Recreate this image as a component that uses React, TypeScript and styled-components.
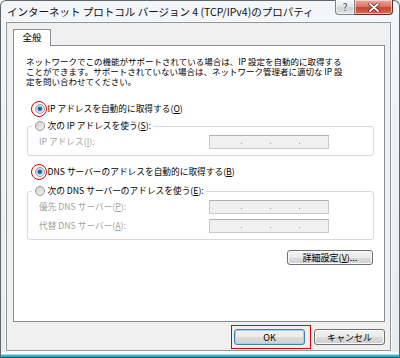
import React from "react";
import styled, { createGlobalStyle } from "styled-components";

const FONT = `"Noto Sans CJK JP", "Noto Sans", sans-serif`;

const Global = createGlobalStyle`
  html, body { margin: 0; padding: 0; background: #ffffff; }
  body { font-family: ${FONT}; -webkit-font-smoothing: antialiased; }
  #root { width: 400px; height: 358px; }
`;

const Window = styled.div`
  box-sizing: border-box;
  width: 400px;
  height: 358px;
  display: flex;
  flex-direction: column;
  padding: 0 8px 7px 5px;
  border: 1px solid #60666b;
  border-bottom: none;
  border-radius: 6px 6px 0 0;
  background:
    linear-gradient(to top, #36464c 0 1px, #2eaed3 1px 3px, #a5e2f1 3px 4px, #fbfcfd 4px 6px, transparent 6px),
    linear-gradient(to bottom, #f4f6f8 0%, #e8ecef 100%);
  font-family: ${FONT};
  color: #000;
`;

const TitleBar = styled.div`
  height: 21px;
  display: flex;
  justify-content: space-between;
  align-items: flex-start;
`;

const Title = styled.div`
  padding-left: 1px;
  font-size: 10.5px;
  line-height: 21px;
  white-space: nowrap;
  color: #111;
`;

const CaptionButtons = styled.div`
  display: flex;
  margin-top: -1px;
  margin-right: -2px;
`;

const CaptionButton = styled.div<{ $kind: "help" | "close" }>`
  box-sizing: border-box;
  height: 15px;
  width: ${(p) => (p.$kind === "close" ? 38 : 20)}px;
  display: flex;
  align-items: center;
  justify-content: center;
  border: 1px solid ${(p) => (p.$kind === "close" ? "#6b2a22" : "#7c8287")};
  border-top: none;
  border-radius: ${(p) => (p.$kind === "close" ? "0 0 4px 0" : "0 0 0 4px")};
  border-left: ${(p) => (p.$kind === "close" ? "none" : "")};
  background: ${(p) =>
    p.$kind === "close"
      ? "linear-gradient(to bottom, #e7a99c 0%, #d8776a 45%, #c9452f 55%, #d5694f 100%)"
      : "linear-gradient(to bottom, #f6f7f8 0%, #e4e8eb 45%, #ccd2d7 55%, #dfe4e8 100%)"};
  box-shadow: inset 0 0 0 1px rgba(255, 255, 255, 0.55);
  font-size: 10px;
  line-height: 1;
  color: #3a3f44;
  text-shadow: 0 0 2px #fff, 0 0 2px #fff;
`;

const Client = styled.div`
  flex: 1;
  box-sizing: border-box;
  display: flex;
  flex-direction: column;
  padding: 6px 3px 5px 6px;
  border: 1px solid #92979c;
  background: #f0f0f0;
  box-shadow: 0 0 0 1px rgba(255, 255, 255, 0.85);
`;

const TabStrip = styled.div`
  display: flex;
  height: 16px;
`;

const Tab = styled.div`
  box-sizing: border-box;
  width: 38px;
  height: 17px;
  position: relative;
  z-index: 1;
  border: 1px solid #898c95;
  border-bottom: none;
  background: #ffffff;
  font-size: 9.5px;
  line-height: 15px;
  text-align: center;
`;

const Panel = styled.div`
  box-sizing: border-box;
  width: 372px;
  height: 277px;
  border: 1px solid #898c95;
  background: #ffffff;
  padding: 10px 11px 0 12px;
  display: flex;
  flex-direction: column;
  font-size: 8.7px;
`;

const Description = styled.div`
  font-size: 8.5px;
  line-height: 10px;
  white-space: nowrap;
`;

const RadioRow = styled.div<{ $indent?: number; $top?: number }>`
  display: flex;
  align-items: center;
  height: 12px;
  margin-left: ${(p) => p.$indent ?? 0}px;
  margin-top: ${(p) => p.$top ?? 0}px;
  white-space: nowrap;
  line-height: 12px;
`;

const RadioMark = styled.span`
  position: relative;
  width: 10px;
  height: 10px;
  flex: 0 0 10px;
  margin-right: 2.5px;
  display: inline-flex;
`;

const Ring = styled.span`
  position: absolute;
  left: -4px;
  top: -3px;
  width: 14px;
  height: 14px;
  border: 1.4px solid #e40000;
  border-radius: 50%;
`;

const Group = styled.fieldset<{ $top: number }>`
  box-sizing: border-box;
  width: 347px;
  margin: ${(p) => p.$top}px 0 0 1px;
  padding: 0 0 6px 0;
  border: 1px solid #d5dadd;
  border-radius: 3px;
  min-inline-size: 0;
`;

const GroupLegend = styled.legend`
  margin-left: 4px;
  padding: 0 2px 0 3px;
  font-size: 8.7px;
`;

const FieldRow = styled.div<{ $top: number }>`
  display: flex;
  align-items: center;
  height: 14px;
  padding-left: 11px;
  margin-top: ${(p) => p.$top}px;
`;

const FieldLabel = styled.span`
  flex: 0 0 170px;
  color: #a2a2a2;
  white-space: nowrap;
  line-height: 14px;
`;

const IpField = styled.div`
  box-sizing: border-box;
  width: 120px;
  height: 14px;
  border: 1px solid #c6c9cc;
  border-top-color: #aeb2b6;
  background: #f0f0f0;
  display: flex;
  justify-content: space-between;
  align-items: flex-end;
  padding: 0 28px 4px 31px;
`;

const Dot = styled.span`
  width: 1px;
  height: 1px;
  background: #9a9a9a;
`;

const Key = styled.span`
  text-decoration: underline;
  text-underline-offset: 1px;
  text-decoration-thickness: 1px;
`;

const AdvancedRow = styled.div`
  display: flex;
  justify-content: flex-end;
  margin-top: 10px;
`;

const PushButton = styled.button<{ $w: number; $h: number; $default?: boolean }>`
  box-sizing: border-box;
  width: ${(p) => p.$w}px;
  height: ${(p) => p.$h}px;
  padding: 0;
  margin: 0;
  border: 1px solid ${(p) => (p.$default ? "#3c7fb1" : "#707070")};
  border-radius: 3px;
  background: linear-gradient(to bottom, #f2f2f2 0%, #ebebeb 50%, #dddddd 50%, #cfcfcf 100%);
  box-shadow: inset 0 0 0 1px ${(p) => (p.$default ? "#9fd5f2" : "#fbfbfb")};
  font-family: ${FONT};
  font-size: 9px;
  line-height: 1;
  color: #000;
  display: flex;
  align-items: center;
  justify-content: center;
  white-space: nowrap;
`;

const ButtonBar = styled.div`
  display: flex;
  justify-content: flex-end;
  gap: 9px;
  margin-top: 7px;
  padding-right: 2px;
`;

const Highlight = styled.div`
  position: relative;
  display: flex;
`;

const HighlightBox = styled.span`
  position: absolute;
  left: -3px;
  top: -4px;
  right: -6px;
  bottom: -4px;
  border: 1.2px solid #e40000;
  pointer-events: none;
`;

function Radio({ checked, ring }: { checked?: boolean; ring?: boolean }) {
  return (
    <RadioMark>
      <svg width="10" height="10" viewBox="0 0 10 10">
        <defs>
          <linearGradient id="rb" x1="0" y1="0" x2="1" y2="1">
            <stop offset="0" stopColor="#c8cbce" />
            <stop offset="1" stopColor="#f9f9f9" />
          </linearGradient>
          <radialGradient id="rd" cx="0.45" cy="0.4" r="0.6">
            <stop offset="0" stopColor="#0d4b8c" />
            <stop offset="0.6" stopColor="#1f78c1" />
            <stop offset="1" stopColor="#7fd0f7" />
          </radialGradient>
        </defs>
        <circle cx="5" cy="5" r="4.5" fill="url(#rb)" stroke="#8d9194" strokeWidth="0.9" />
        {checked && <circle cx="5" cy="5" r="2.6" fill="url(#rd)" />}
      </svg>
      {ring && <Ring />}
    </RadioMark>
  );
}

function CloseGlyph() {
  return (
    <svg width="12" height="9" viewBox="0 0 12 9">
      <path d="M2 1 L10 8 M10 1 L2 8" stroke="#5a1d16" strokeWidth="3.2" strokeLinecap="round" />
      <path d="M2 1 L10 8 M10 1 L2 8" stroke="#ffffff" strokeWidth="1.8" strokeLinecap="round" />
    </svg>
  );
}

export default function App() {
  return (
    <>
      <Global />
      <Window>
        <TitleBar>
          <Title>インターネット プロトコル バージョン 4 (TCP/IPv4)のプロパティ</Title>
          <CaptionButtons>
            <CaptionButton $kind="help">?</CaptionButton>
            <CaptionButton $kind="close">
              <CloseGlyph />
            </CaptionButton>
          </CaptionButtons>
        </TitleBar>
        <Client>
          <TabStrip>
            <Tab>全般</Tab>
          </TabStrip>
          <Panel>
            <Description>
              ネットワークでこの機能がサポートされている場合は、IP 設定を自動的に取得する
              <br />
              ことができます。サポートされていない場合は、ネットワーク管理者に適切な IP 設
              <br />
              定を問い合わせてください。
            </Description>
            <RadioRow $indent={9} $top={17}>
              <Radio checked ring />
              IP アドレスを自動的に取得する(<Key>O</Key>)
            </RadioRow>
            <Group $top={5}>
              <GroupLegend>
                <RadioRow>
                  <Radio />
                  次の IP アドレスを使う(<Key>S</Key>):
                </RadioRow>
              </GroupLegend>
              <FieldRow $top={3}>
                <FieldLabel>
                  IP アドレス(<Key>I</Key>):
                </FieldLabel>
                <IpField>
                  <Dot />
                  <Dot />
                  <Dot />
                </IpField>
              </FieldRow>
            </Group>
            <RadioRow $indent={9} $top={10}>
              <Radio checked ring />
              DNS サーバーのアドレスを自動的に取得する(<Key>B</Key>)
            </RadioRow>
            <Group $top={7}>
              <GroupLegend>
                <RadioRow>
                  <Radio />
                  次の DNS サーバーのアドレスを使う(<Key>E</Key>):
                </RadioRow>
              </GroupLegend>
              <FieldRow $top={3}>
                <FieldLabel>
                  優先 DNS サーバー(<Key>P</Key>):
                </FieldLabel>
                <IpField>
                  <Dot />
                  <Dot />
                  <Dot />
                </IpField>
              </FieldRow>
              <FieldRow $top={5}>
                <FieldLabel>
                  代替 DNS サーバー(<Key>A</Key>):
                </FieldLabel>
                <IpField>
                  <Dot />
                  <Dot />
                  <Dot />
                </IpField>
              </FieldRow>
            </Group>
            <AdvancedRow>
              <PushButton $w={86} $h={15}>
                詳細設定(<Key>V</Key>)...
              </PushButton>
            </AdvancedRow>
          </Panel>
          <ButtonBar>
            <Highlight>
              <PushButton $w={71} $h={16} $default>
                OK
              </PushButton>
              <HighlightBox />
            </Highlight>
            <PushButton $w={71} $h={16}>
              キャンセル
            </PushButton>
          </ButtonBar>
        </Client>
      </Window>
    </>
  );
}
